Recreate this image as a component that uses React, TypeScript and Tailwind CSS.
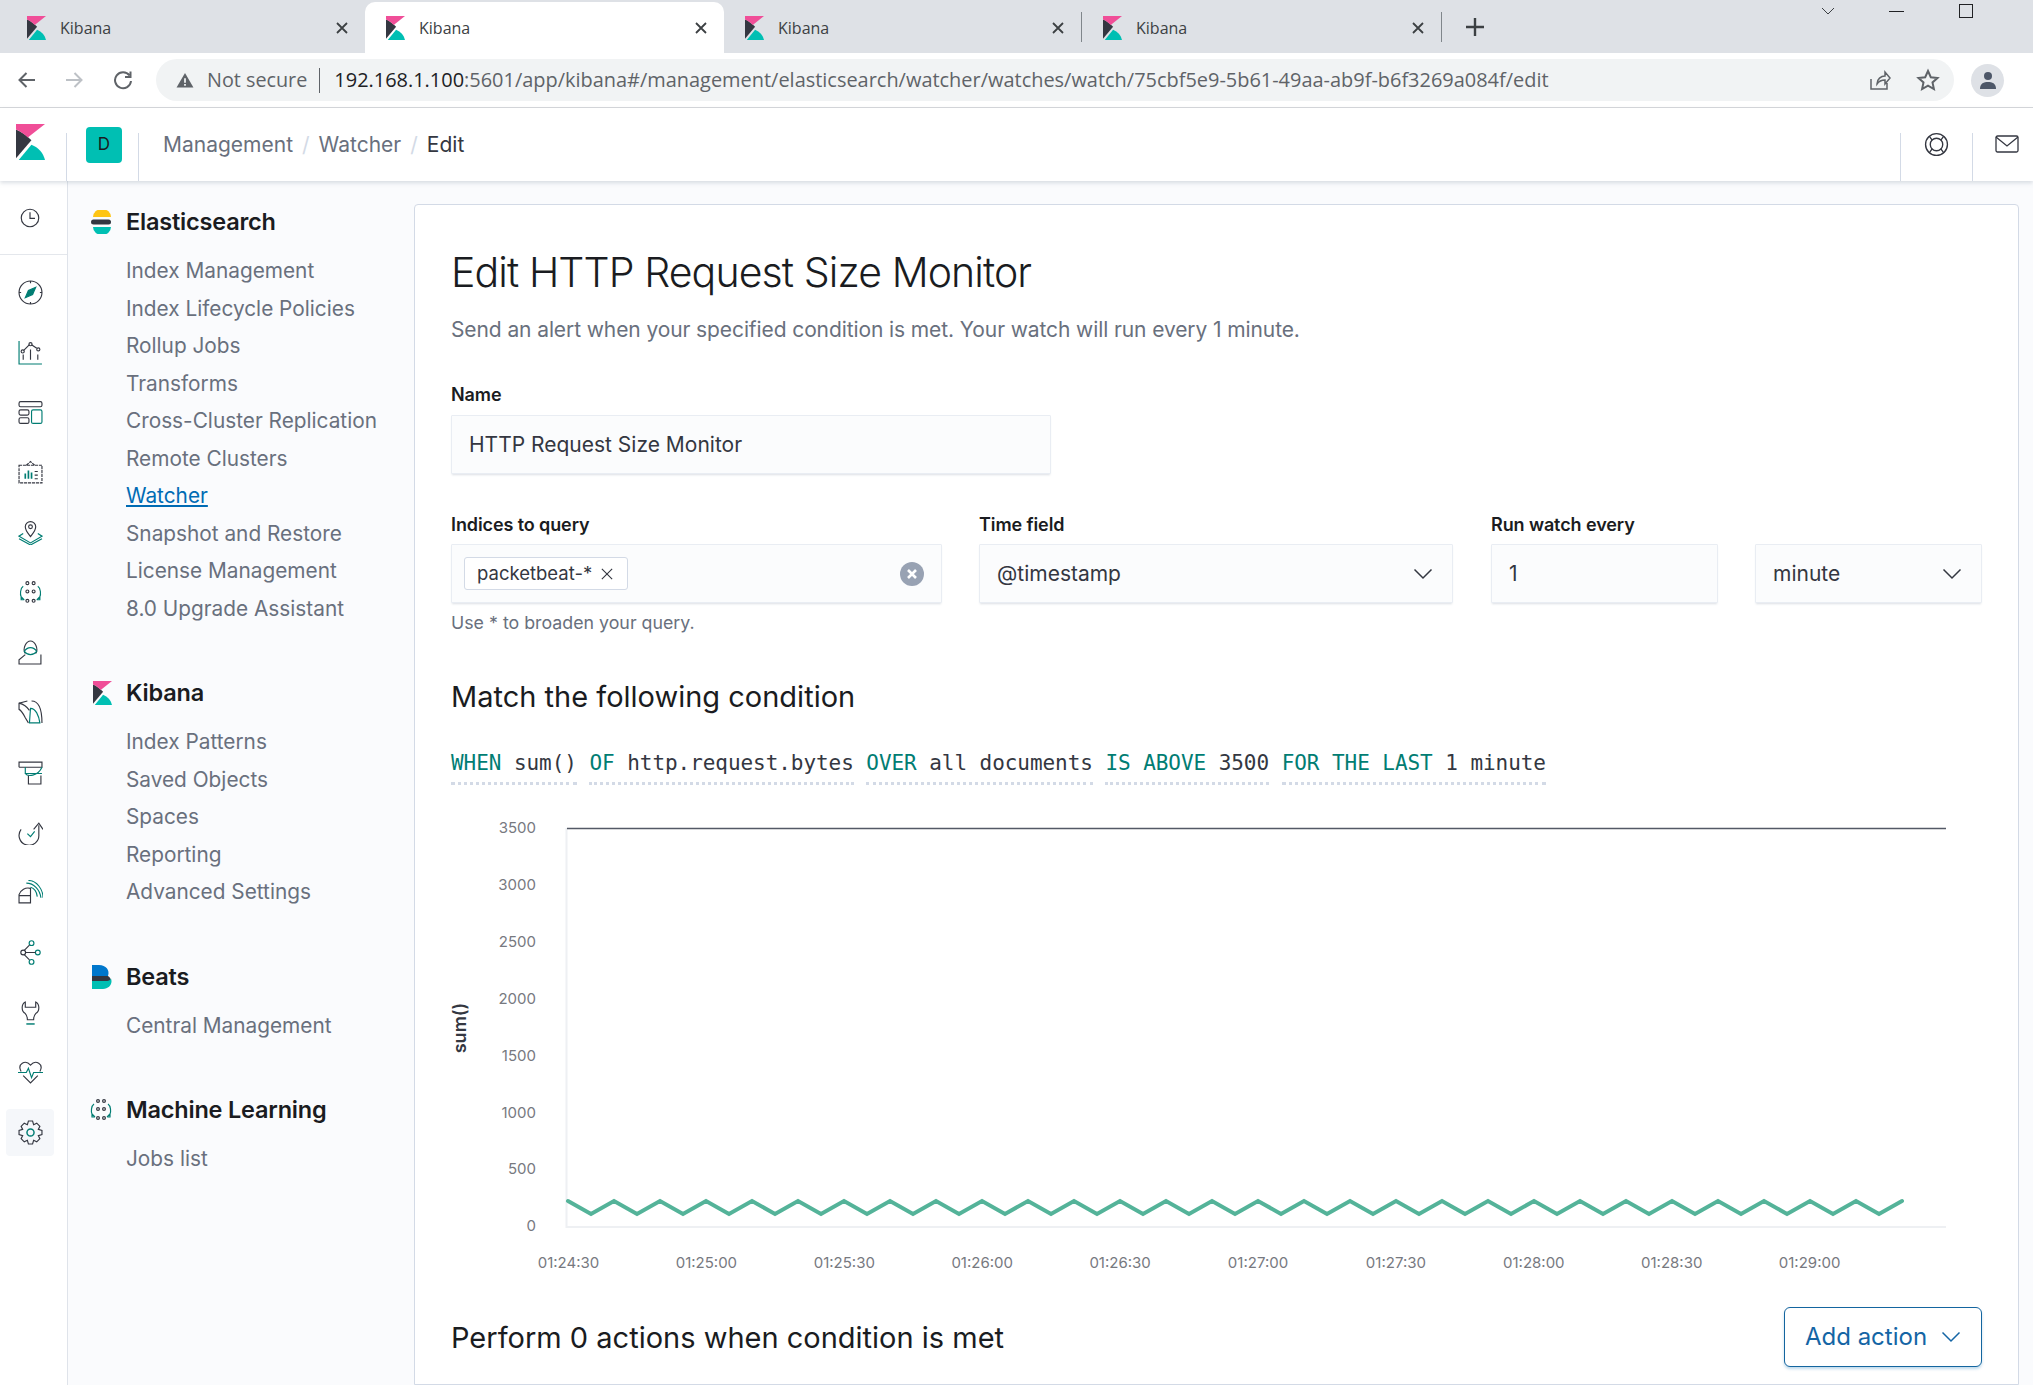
import { ReactNode } from "react";

const sans = "font-['Inter','Noto_Sans',sans-serif]";

const KibanaLogo = ({ className }: { className: string }) => (
  <svg viewBox="0 0 32 40" className={className} preserveAspectRatio="none">
    <path d="M0 6V38L17 18C11 12 5 8 0 6Z" fill="#343741" />
    <path d="M0 0H32L13 15C9 11 5 8 0 6Z" fill="#f04e98" />
    <path d="M3 40L17 23C25 26 30 32 32 40Z" fill="#00bfb3" />
  </svg>
);

const ChromeTab = ({ active, narrow }: { active?: boolean; narrow?: boolean }) => (
  <div className={`relative flex h-[51px] items-center rounded-t-[10px] pl-[21px] pr-[16px] ${narrow ? "w-[357px]" : "w-[359px]"} ${active ? "bg-white" : ""}`}>
    <KibanaLogo className="h-[24px] w-[19px]" />
    <span className="ml-[14px] flex-1 text-[16px] text-[#3c4043]">Kibana</span>
    <svg viewBox="0 0 14 14" className="h-[14px] w-[14px]" fill="none" stroke="#3c4043" strokeWidth="1.8">
      <path d="M2 2L12 12M12 2L2 12" />
    </svg>
  </div>
);

const NavIcon = ({ children, selected }: { children: ReactNode; selected?: boolean }) => (
  <div className="flex h-[60px] items-center pl-[6px]">
    <div className={`flex h-[47px] w-[48px] items-center justify-center rounded-[4px] ${selected ? "bg-[#f5f7fa]" : ""}`}>
      <svg viewBox="0 0 24 24" className="h-[25px] w-[25px]" fill="none" stroke="#343741" strokeWidth="1.1">
        {children}
      </svg>
    </div>
  </div>
);

const teal = "#017d73";

const MlDots = ({ color = "#343741" }: { color?: string }) => (
  <>
    <circle cx="9" cy="3" r="1.4" stroke={color} />
    <circle cx="15" cy="3" r="1.4" stroke={color} />
    <circle cx="9" cy="11" r="1.4" stroke={color} />
    <circle cx="15" cy="11" r="1.4" stroke={color} />
    <circle cx="9" cy="20" r="1.4" stroke={color} />
    <circle cx="15" cy="20" r="1.4" stroke={color} />
    <path d="M5 6C2 8 2 14 3 16L6 19M3 16L3 19H6M19 6C22 8 22 14 21 16L18 19M21 16V19H18" stroke={teal} />
  </>
);

const SideSection = ({ icon, title, items, active }: { icon: ReactNode; title: string; items: string[]; active?: string }) => (
  <div className="mb-[47px]">
    <div className="mb-[11px] flex h-[38px] items-center">
      <div className="flex w-[36px] justify-start">{icon}</div>
      <span className="whitespace-nowrap text-[23.5px] font-semibold tracking-[-0.2px] text-[#1a1c21]">{title}</span>
    </div>
    {items.map((item) => (
      <div
        key={item}
        className={`flex h-[37.5px] items-center whitespace-nowrap pl-[36px] text-[20.8px] ${item === active ? "text-[#006bb4] underline" : "text-[#69707d]"}`}
      >
        {item}
      </div>
    ))}
  </div>
);

const fieldBox = "rounded-[1px] border border-[#e9edf3] bg-[#fbfcfd] shadow-[0_2px_2px_-1px_rgba(152,162,179,0.35)]";

const Chevron = ({ stroke = "#343741" }: { stroke?: string }) => (
  <svg viewBox="0 0 20 12" className="h-[12px] w-[20px]" fill="none" stroke={stroke} strokeWidth="1.5">
    <path d="M1.5 1.5L10 10L18.5 1.5" />
  </svg>
);

const Label = ({ children }: { children: ReactNode }) => (
  <div className="flex h-[24px] items-center text-[18px] font-semibold tracking-[-0.1px] text-[#1a1c21]">{children}</div>
);

const Clause = ({ kw, value }: { kw: string; value: string }) => (
  <span className="border-b-[3px] border-dotted border-[#d3dae6] pb-[7px]">
    <span className="text-[#017d73]">{kw}</span> {value}
  </span>
);

const zigzag = Array.from({ length: 59 }, (_, i) => `${568 + i * 23},${i % 2 === 0 ? 1200 : 1213}`).join(" ");
const yTicks = [3500, 3000, 2500, 2000, 1500, 1000, 500, 0];
const xTicks = ["01:24:30", "01:25:00", "01:25:30", "01:26:00", "01:26:30", "01:27:00", "01:27:30", "01:28:00", "01:28:30", "01:29:00"];

const Chart = () => (
  <svg viewBox="451 800 1531 480" className="mt-[23px] block h-[480px] w-[1531px] overflow-visible">
    <path d="M566.5 827V1226H1946" stroke="#eef0f3" strokeWidth="2" fill="none" />
    <path d="M567 827.5H1946" stroke="#535966" strokeWidth="1.3" />
    <polyline points={zigzag} fill="none" stroke="#54b399" strokeWidth="4" strokeLinecap="round" strokeLinejoin="miter" />
    {yTicks.map((t, i) => (
      <text key={t} x="536" y={827 + i * 56.9 + 5} textAnchor="end" fontSize="15" fill="#77797f" fontFamily="Inter, sans-serif">
        {t}
      </text>
    ))}
    {xTicks.map((t, i) => (
      <text key={t} x={568.5 + i * 137.9} y="1267" textAnchor="middle" fontSize="15" fill="#77797f" fontFamily="Inter, sans-serif">
        {t}
      </text>
    ))}
    <text x="0" y="0" transform="translate(466 1027) rotate(-90)" textAnchor="middle" fontSize="18" fontWeight="600" fill="#343741" fontFamily="Inter, sans-serif">
      sum()
    </text>
  </svg>
);

export default function App() {
  return (
    <div className={`h-[1385px] w-[2033px] overflow-hidden bg-[#fafbfd] ${sans}`}>
      {/* browser tab strip */}
      <div className={`flex h-[53px] items-end bg-[#dee1e6] pl-[6px] font-['Open_Sans',sans-serif]`}>
        <ChromeTab />
        <ChromeTab active />
        <ChromeTab narrow />
        <div className="h-[30px] self-center border-r border-[#80868b]" />
        <ChromeTab />
        <div className="h-[30px] self-center border-r border-[#80868b]" />
        <svg viewBox="0 0 20 20" className="mb-[16px] ml-[23px] h-[20px] w-[20px]" fill="none" stroke="#3c4043" strokeWidth="2.4">
          <path d="M10 1V19M1 10H19" />
        </svg>
        <div className="mb-[35px] ml-[336px] flex items-center">
          <svg viewBox="0 0 14 8" className="h-[8px] w-[14px]" fill="none" stroke="#3c4043" strokeWidth="1">
            <path d="M1 1L7 7L13 1" />
          </svg>
          <div className="ml-[54px] h-[1px] w-[15px] bg-[#202124]" />
          <div className="ml-[55px] h-[14px] w-[14px] border border-[#202124]" />
        </div>
      </div>

      {/* browser toolbar */}
      <div className="flex h-[55px] items-center border-b border-[#d5d7da] bg-white font-['Open_Sans',sans-serif]">
        <div className="flex w-[156px] items-center pl-[17px]">
          <svg viewBox="0 0 20 20" className="h-[20px] w-[20px]" fill="none" stroke="#5f6368" strokeWidth="2">
            <path d="M18 10H3M9.5 3L2.5 10L9.5 17" />
          </svg>
          <svg viewBox="0 0 20 20" className="ml-[27px] h-[20px] w-[20px]" fill="none" stroke="#bdc1c6" strokeWidth="2">
            <path d="M2 10H17M10.5 3L17.5 10L10.5 17" />
          </svg>
          <svg viewBox="0 0 20 20" className="ml-[29px] h-[20px] w-[20px]" fill="none" stroke="#5f6368" strokeWidth="2">
            <path d="M16.5 5.5A8 8 0 1 0 18 11M17.5 1.5V7H12" />
          </svg>
        </div>
        <div className="flex h-[42px] w-[1798px] items-center rounded-full bg-[#f1f3f4] pl-[20px] pr-[14px]">
          <svg viewBox="0 0 20 18" className="h-[16px] w-[18px]" fill="#5f6368">
            <path d="M10 1L19.5 17.5H0.5Z" />
            <path d="M9 7H11V12H9ZM9 13.5H11V15.5H9Z" fill="#f1f3f4" />
          </svg>
          <span className="ml-[13px] text-[19.8px] text-[#5f6368]">Not secure</span>
          <div className="ml-[12px] mr-[14px] h-[25px] border-r border-[#5f6368]" />
          <span className="flex-1 whitespace-nowrap text-[19.95px] text-[#5f6368]">
            <span className="text-[#202124]">192.168.1.100</span>:5601/app/kibana#/management/elasticsearch/watcher/watches/watch/75cbf5e9-5b61-49aa-ab9f-b6f3269a084f/edit
          </span>
          <svg viewBox="0 0 24 24" className="h-[24px] w-[24px]" fill="none" stroke="#5f6368" strokeWidth="1.5">
            <path d="M4 11V21H20V15M10 16C10 11 14 8 18 8V4L23 10L18 16V12C15 12 12 13 10 16Z" />
          </svg>
          <svg viewBox="0 0 24 24" className="ml-[25px] h-[24px] w-[24px]" fill="none" stroke="#5f6368" strokeWidth="2">
            <path d="M12 3L14.8 9.2L21.5 9.9L16.5 14.4L17.9 21L12 17.6L6.1 21L7.5 14.4L2.5 9.9L9.2 9.2Z" />
          </svg>
        </div>
        <div className="ml-[17px] flex h-[33px] w-[33px] items-center justify-center rounded-full bg-[#dee1e6]">
          <svg viewBox="0 0 20 20" className="h-[20px] w-[20px]" fill="#4d5768">
            <circle cx="10" cy="6" r="4" />
            <path d="M2 19C2 13 6 12 10 12C14 12 18 13 18 19Z" />
          </svg>
        </div>
      </div>

      {/* kibana header */}
      <header className="relative flex h-[73px] items-center bg-white shadow-[0_2px_4px_rgba(152,162,179,0.35)]">
        <div className="flex w-[66px] justify-center pr-[6px]">
          <KibanaLogo className="-mt-[5px] h-[36px] w-[29px]" />
        </div>
        <div className="h-[48px] self-end border-l border-[#d3dae6]" />
        <div className="ml-[19px] flex h-[36px] w-[36px] items-center justify-center rounded-[4px] bg-[#00bfb3] text-[17px] text-[#1a1c21]">D</div>
        <div className="ml-[16px] h-[48px] self-end border-l border-[#d3dae6]" />
        <nav className="ml-[24px] flex flex-1 items-center text-[21px] text-[#69707d]">
          <span>Management</span>
          <span className="mx-[9px] text-[#d3dae6]">/</span>
          <span>Watcher</span>
          <span className="mx-[9px] text-[#d3dae6]">/</span>
          <span className="text-[#343741]">Edit</span>
        </nav>
        <div className="flex h-[48px] w-[72px] items-start justify-center self-end border-l border-[#d3dae6]">
          <svg viewBox="0 0 24 24" className="-mt-[1px] h-[25px] w-[25px]" fill="none" stroke="#343741" strokeWidth="1.3">
            <circle cx="12" cy="12" r="10.5" />
            <circle cx="12" cy="12" r="6" />
            <path d="M5 4L8 8M19 4L16 8M5 20L8 16M19 20L16 16" />
          </svg>
        </div>
        <div className="flex h-[48px] w-[61px] items-start justify-center self-end border-l border-[#d3dae6] pr-[1px] pl-[9px]">
          <svg viewBox="0 0 24 18" className="mt-[2px] h-[18px] w-[24px]" fill="none" stroke="#343741" strokeWidth="1.3">
            <rect x="1" y="1" width="22" height="16" rx="1.5" />
            <path d="M1 2L12 11L23 2" />
          </svg>
        </div>
      </header>

      <div className="flex">
        {/* icon rail */}
        <aside className="h-[1204px] w-[68px] shrink-0 border-r border-[#dfe3ea] bg-white">
          <div className="flex h-[74px] items-center border-b border-[#e4e7ec] pl-[20px]">
            <svg viewBox="0 0 24 24" className="h-[20px] w-[20px]" fill="none" stroke="#343741" strokeWidth="1.4">
              <circle cx="12" cy="12" r="10.5" />
              <path d="M12 5V12.5H18" />
            </svg>
          </div>
          <div className="pt-[7px]">
            <NavIcon>
              <circle cx="12" cy="12" r="11" />
              <path d="M12 1V3M12 21V23M1 12H3M21 12H23" />
              <path d="M17 7L14 14L7 17L10 10Z" fill={teal} stroke={teal} />
            </NavIcon>
            <NavIcon>
              <path d="M1 1V23H23" stroke={teal} />
              <path d="M5 19V14M12 19V9M19 19V14" />
              <path d="M5.5 10L11 4.5M13 4.5L18 8" />
              <circle cx="4.5" cy="11" r="1.5" />
              <circle cx="12" cy="4" r="1.5" />
              <circle cx="19.5" cy="9" r="1.5" />
            </NavIcon>
            <NavIcon>
              <rect x="1" y="1.5" width="22" height="5" rx="1.5" />
              <rect x="1" y="9.5" width="9.5" height="5" rx="1.5" />
              <rect x="1" y="17" width="9.5" height="5.5" rx="1.5" />
              <rect x="13" y="9.5" width="10" height="13" rx="1.5" stroke={teal} />
            </NavIcon>
            <NavIcon>
              <path d="M8 5L12 1.5L16 5M1 5H23V22H1Z" strokeDasharray="3 0.8" />
              <path d="M7 18V13M10 18V10M13 18V12" stroke={teal} strokeWidth="1.6" />
              <path d="M16 11H19M16 14.5H19M16 18H19" />
            </NavIcon>
            <NavIcon>
              <path d="M12 16C9 12 7 10 7 6.5A5 5 0 0 1 17 6.5C17 10 15 12 12 16Z" />
              <circle cx="12" cy="6.5" r="1.8" />
              <path d="M5 13L1 15.5L12 22L23 15.5L19 13M1 18L12 24L23 18" stroke={teal} />
            </NavIcon>
            <NavIcon>
              <MlDots />
            </NavIcon>
            <NavIcon>
              <path d="M7 13C4 8 8 1 12 1C16 1 20 8 17 13" />
              <path d="M7 14L1 19V23H22V14" />
              <path d="M6 11C9 6 15 6 18 11C15 15 9 15 6 11Z" stroke={teal} />
            </NavIcon>
            <NavIcon>
              <path d="M10 22L7 17C5 13 3 10 1 9V3L9 1M13 1C19 1 23 8 23 22" />
              <path d="M12 8C17 8 20 15 21 22H11Z" stroke={teal} />
              <path d="M1 3C5 4 9 7 11 10" />
            </NavIcon>
            <NavIcon>
              <path d="M1 7V2H23V7H1" />
              <path d="M7 7V13H23" stroke={teal} />
              <path d="M7 13C9 16 19 16 23 7" stroke={teal} />
              <path d="M10 15V23H22V15" />
            </NavIcon>
            <NavIcon>
              <path d="M3 9A9.5 9.5 0 1 0 20 14V5" />
              <path d="M15 9L20 3L24 9" />
              <path d="M9 13L12 16L16 11" stroke={teal} />
            </NavIcon>
            <NavIcon>
              <path d="M12 22H1V14A9 9 0 0 1 12 8V22ZM1 15H12" />
              <path d="M8 3C15 3 21 9 22 17M10 0.5C18 0.5 24 9 24 17M12 7C16 8 18 12 18.5 16" stroke={teal} />
            </NavIcon>
            <NavIcon>
              <circle cx="13" cy="3" r="2.3" stroke={teal} />
              <circle cx="19" cy="12" r="2.3" stroke={teal} />
              <circle cx="13" cy="21" r="2.3" stroke={teal} />
              <circle cx="5" cy="12" r="2.3" />
              <path d="M7 12H17M6 10L11 5M6 14L11 19" />
            </NavIcon>
            <NavIcon>
              <path d="M7 2C3 4 3 11 7 13C8 14 9 15 9 19H15C15 15 16 14 17 13C21 11 21 4 17 2V7H7Z" />
              <path d="M8 23H16" stroke={teal} strokeWidth="1.4" />
            </NavIcon>
            <NavIcon>
              <path d="M3 11C-1 4 7 -1 12 5C17 -1 25 4 21 11M5 15L12 22L19 15" />
              <path d="M0 12H8L10 8L13 17L15 12H24" stroke={teal} />
            </NavIcon>
            <NavIcon selected>
              <path d="M10 1H14L15 4.5L18 3L21 6L19.5 9L23 10V14L19.5 15L21 18L18 21L15 19.5L14 23H10L9 19.5L6 21L3 18L4.5 15L1 14V10L4.5 9L3 6L6 3L9 4.5Z" />
              <circle cx="12" cy="12" r="3.4" stroke={teal} strokeWidth="1.4" />
            </NavIcon>
          </div>
        </aside>

        {/* management side nav */}
        <aside className="w-[346px] shrink-0 pl-[22px] pt-[22px]">
          <SideSection
            icon={
              <svg viewBox="0 0 24 24" className="h-[24px] w-[24px]">
                <path d="M3 7A9 8 0 0 1 21 7Z" fill="#fec514" />
                <rect x="1" y="9.5" width="20" height="5" rx="2.5" fill="#343741" />
                <path d="M3 17H21A9 8 0 0 1 3 17Z" fill="#00bfb3" />
              </svg>
            }
            title="Elasticsearch"
            active="Watcher"
            items={[
              "Index Management",
              "Index Lifecycle Policies",
              "Rollup Jobs",
              "Transforms",
              "Cross-Cluster Replication",
              "Remote Clusters",
              "Watcher",
              "Snapshot and Restore",
              "License Management",
              "8.0 Upgrade Assistant",
            ]}
          />
          <SideSection
            icon={<KibanaLogo className="ml-[3px] h-[24px] w-[19px]" />}
            title="Kibana"
            items={["Index Patterns", "Saved Objects", "Spaces", "Reporting", "Advanced Settings"]}
          />
          <SideSection
            icon={
              <svg viewBox="0 0 20 24" className="ml-[2px] h-[24px] w-[20px]">
                <path d="M0 0H7C14 0 18 5 16 11H0Z" fill="#0077cc" />
                <path d="M0 11H16C18 12 19 14 19 16H0Z" fill="#343741" />
                <path d="M0 16H15C17 16 18.5 15 19 13.5C21 19 17 24 11 24H0Z" fill="#00bfb3" />
              </svg>
            }
            title="Beats"
            items={["Central Management"]}
          />
          <SideSection
            icon={
              <svg viewBox="0 0 24 24" className="-ml-[1px] h-[24px] w-[24px]" fill="none" strokeWidth="1.2">
                <MlDots />
              </svg>
            }
            title="Machine Learning"
            items={["Jobs list"]}
          />
        </aside>

        {/* page content */}
        <main className="mt-[23px] mr-[14px] flex-1 rounded-t-[4px] border border-[#d3dae6] bg-white pl-[36px] pr-[36px] pt-[40px]">
          <h1 className="flex h-[56px] items-center whitespace-nowrap text-[41px] font-light tracking-[-0.9px] text-[#1a1c21]">Edit HTTP Request Size Monitor</h1>
          <p className="mt-[14px] flex h-[30px] items-center whitespace-nowrap text-[21px] tracking-[-0.1px] text-[#69707d]">
            Send an alert when your specified condition is met. Your watch will run every 1 minute.
          </p>

          <div className="mt-[37px]">
            <Label>Name</Label>
            <div className={`mt-[9px] flex h-[59px] w-[600px] items-center px-[17px] text-[21px] text-[#343741] ${fieldBox}`}>HTTP Request Size Monitor</div>
          </div>

          <div className="mt-[38px] flex">
            <div className="w-[491px]">
              <Label>Indices to query</Label>
              <div className={`mt-[8px] flex h-[59px] items-center justify-between pl-[12px] pr-[17px] ${fieldBox}`}>
                <div className="flex h-[33px] w-[164px] items-center gap-[9px] rounded-[3px] border border-[#d3dae6] bg-white pl-[12px] text-[18.5px] text-[#343741]">
                  packetbeat-*
                  <svg viewBox="0 0 14 14" className="h-[12px] w-[12px]" fill="none" stroke="#343741" strokeWidth="1.3">
                    <path d="M1 1L13 13M13 1L1 13" />
                  </svg>
                </div>
                <svg viewBox="0 0 24 24" className="h-[24px] w-[24px]">
                  <circle cx="12" cy="12" r="12" fill="#98a2b3" />
                  <path d="M8 8L16 16M16 8L8 16" stroke="#fff" strokeWidth="2.6" />
                </svg>
              </div>
              <div className="mt-[8px] flex h-[24px] items-center text-[17.8px] text-[#69707d]">Use * to broaden your query.</div>
            </div>
            <div className="ml-[37px] w-[474px]">
              <Label>Time field</Label>
              <div className={`mt-[8px] flex h-[59px] items-center justify-between pl-[17px] pr-[19px] text-[21px] text-[#343741] ${fieldBox}`}>
                @timestamp
                <Chevron />
              </div>
            </div>
            <div className="ml-[38px]">
              <Label>Run watch every</Label>
              <div className="mt-[8px] flex gap-[37px]">
                <div className={`flex h-[59px] w-[227px] items-center px-[17px] text-[21px] text-[#343741] ${fieldBox}`}>1</div>
                <div className={`flex h-[59px] w-[227px] items-center justify-between pl-[17px] pr-[19px] text-[21px] text-[#343741] ${fieldBox}`}>
                  minute
                  <Chevron />
                </div>
              </div>
            </div>
          </div>

          <h2 className="mt-[42px] flex h-[40px] items-center text-[29px] font-normal text-[#1a1c21]">Match the following condition</h2>

          <div className="mt-[31px] h-[30px] whitespace-pre font-['DejaVu_Sans_Mono',monospace] text-[21px] leading-[30px] tracking-[-0.06px] text-[#343741]">
            <Clause kw="WHEN" value="sum()" /> <Clause kw="OF" value="http.request.bytes" /> <Clause kw="OVER" value="all documents" />{" "}
            <Clause kw="IS ABOVE" value="3500" /> <Clause kw="FOR THE LAST" value="1 minute" />
          </div>

          <Chart />

          <div className="mt-[26px] flex items-center justify-between">
            <h2 className="pt-[2px] text-[29px] font-normal text-[#1a1c21]">Perform 0 actions when condition is met</h2>
            <button className="flex h-[60px] w-[198px] items-center justify-center gap-[14px] rounded-[6px] border border-[#14659f] bg-white text-[24px] text-[#1465a5] shadow-[0_2px_3px_rgba(0,107,180,0.25)]">
              Add action
              <Chevron stroke="#1465a5" />
            </button>
          </div>
        </main>
      </div>
    </div>
  );
}
